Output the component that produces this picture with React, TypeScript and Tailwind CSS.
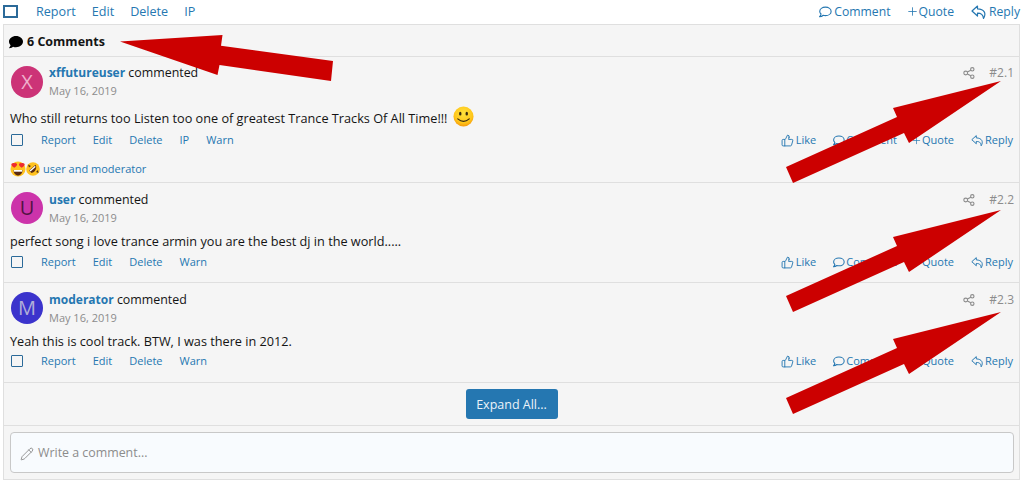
import { Plus, ThumbsUp, Pencil } from "lucide-react";
import { FaComment } from "react-icons/fa";

const font = { fontFamily: '"Open Sans", "Noto Sans", sans-serif' };

function ReplyIcon({ size = 14 }: { size?: number }) {
	return (
		<svg width={size} height={size} viewBox="0 0 16 16" fill="none" stroke="currentColor" strokeWidth="1.2">
			<path d="M6.5 2 L1 7 L6.5 12 V9.2 C10 9.2 12 10 12.5 14.5 C15.5 9.5 13.5 5 6.5 4.8 Z" strokeLinejoin="round" />
		</svg>
	);
}

function BubbleIcon({ size = 13 }: { size?: number }) {
	return (
		<svg width={size} height={size} viewBox="0 0 16 16" fill="none" stroke="currentColor" strokeWidth="1.3">
			<path d="M8.5 2.5c3.6 0 6.5 2 6.5 4.8s-2.9 4.8-6.5 4.8c-.9 0-1.7-.1-2.5-.4-1 .9-2.6 1.6-4.2 1.6.9-.9 1.5-1.9 1.7-3C2.5 9.400 2 8.400 2 7.300 2 4.500 4.900 2.500 8.500 2.500z" strokeLinejoin="round" />
		</svg>
	);
}

function ShareIcon() {
	return (
		<svg width="12" height="12" viewBox="0 0 12 12" fill="none" stroke="currentColor" strokeWidth="1.1">
			<circle cx="2.700" cy="6" r="1.900" />
			<circle cx="9.300" cy="2.300" r="1.700" />
			<circle cx="9.300" cy="9.700" r="1.700" />
			<path d="M4.400 5.100 7.800 3.200M4.400 6.900 7.800 8.800" />
		</svg>
	);
}

function Arrow({ points }: { points: string }) {
	return <polygon points={points} fill="#cc0000" />;
}

function shift(y: number) {
	return `1001,${81 + y} 893,${108 + y} 897,${117 + y} 786,${167 + y} 793,${183 + y} 904,${133 + y} 909,${143 + y}`;
}

function PostActions({ actions }: { actions: string[] }) {
	return (
		<div className="flex items-center justify-between pr-[6px] text-[11px] leading-[16px] text-[#2577b1]">
			<div className="flex items-center">
				<span className="mr-[18px] h-[12px] w-[12px] rounded-[1px] border-[1.5px] border-[#2b6a99]" />
				<div className="flex gap-[17px]">
					{actions.map((a) => (
						<span key={a}>{a}</span>
					))}
				</div>
			</div>
			<div className="flex items-center">
				<span className="mr-[16px] flex items-center gap-[2px]">
					<ThumbsUp size={13} strokeWidth={1.7} />
					Like
				</span>
				<span className="mr-[14px] flex items-center gap-[1px]">
					<BubbleIcon size={13} />
					Comment
				</span>
				<span className="mr-[17px] flex items-center">
					<Plus size={11} strokeWidth={1.5} />
					Quote
				</span>
				<span className="flex items-center gap-[1px]">
					<ReplyIcon size={13} />
					Reply
				</span>
			</div>
		</div>
	);
}

interface CommentProps {
	name: string;
	letter: string;
	avatar: string;
	number: string;
	text: React.ReactNode;
	actions: string[];
	bodyGap: string;
	className: string;
	avatarGap: string;
	footer?: React.ReactNode;
}

function Comment({ name, letter, avatar, number, text, actions, bodyGap, className, avatarGap, footer }: CommentProps) {
	return (
		<div className={`border-b border-[#dfdfdf] pl-[7px] ${className}`}>
			<div className="flex items-start justify-between pr-[5px]">
				<div className="flex">
					<div className={`mr-[6px] flex h-[32px] w-[32px] items-center justify-center rounded-full text-[20px] ${avatarGap} ${avatar}`}>
						{letter}
					</div>
					<div>
						<div className="mt-[1px] text-[12.4px] leading-[18px] text-[#141414]">
							<b className="text-[12px] font-bold text-[#2577b1]">{name}</b> commented
						</div>
						<div className="mt-[1px] text-[11px] leading-[15px] text-[#8c8c8c]">May 16, 2019</div>
					</div>
				</div>
				<div className="mt-[1px] flex items-center gap-[14px] text-[12px] leading-[18px] text-[#8c8c8c]">
					<ShareIcon />
					{number}
				</div>
			</div>
			<div className={`-ml-[1px] text-[12.7px] leading-[18px] text-[#141414] ${bodyGap}`}>{text}</div>
			<PostActions actions={actions} />
			{footer}
		</div>
	);
}

export default function App() {
	return (
		<div className="relative h-[483px] w-[1029px] overflow-hidden bg-white pl-[3px] pr-[9px]" style={font}>
			<div className="flex h-[24px] items-center justify-between text-[12.2px] text-[#2577b1]">
				<div className="flex items-center">
					<span className="mr-[18px] h-[13px] w-[15px] border-2 border-[#2b6a99]" />
					<div className="flex gap-[16px] text-[12.6px]">
						<span>Report</span>
						<span>Edit</span>
						<span>Delete</span>
						<span>IP</span>
					</div>
				</div>
				<div className="flex items-center">
					<span className="mr-[15px] flex items-center gap-[2px]">
						<BubbleIcon size={14} />
						Comment
					</span>
					<span className="mr-[17px] flex items-center">
						<Plus size={13} strokeWidth={1.5} />
						Quote
					</span>
					<span className="flex items-center gap-[2px]">
						<ReplyIcon size={16} />
						Reply
					</span>
				</div>
			</div>

			<div className="border border-[#dfdfdf] bg-[#f5f5f5]">
				<div className="flex h-[32px] items-center gap-[4px] border-b border-[#dfdfdf] pl-[5px] pt-[3px] text-[12.5px] font-bold text-[#141414]">
					<FaComment size={14} className="text-black" />
					6 Comments
				</div>

				<Comment
					name="xffutureuser"
					letter="X"
					avatar="bg-[#cc3377] text-[#f0b0cc]"
					number="#2.1"
					className="h-[126px] pt-[6px]"
					avatarGap="mt-[3px]"
					bodyGap="mt-[11px] mb-[5px] flex h-[18px] items-center"
					actions={["Report", "Edit", "Delete", "IP", "Warn"]}
					text={
						<>
							Who still returns too Listen too one of greatest Trance Tracks Of All Time!!!
							<svg className="ml-[6px] -mt-[3px]" width="21" height="21" viewBox="0 0 22 22">
								<defs>
									<radialGradient id="smile" cx="50%" cy="35%" r="65%">
										<stop offset="0%" stopColor="#ffe23d" />
										<stop offset="70%" stopColor="#ffc61a" />
										<stop offset="100%" stopColor="#f59a0c" />
									</radialGradient>
								</defs>
								<circle cx="11" cy="11" r="10.500" fill="url(#smile)" />
								<ellipse cx="7.600" cy="8" rx="1.300" ry="2" fill="#3a2a10" />
								<ellipse cx="14.400" cy="8" rx="1.300" ry="2" fill="#3a2a10" />
								<path d="M5 13.500 Q11 18.500 17 13.500" stroke="#3a2a10" strokeWidth="1.300" fill="none" strokeLinecap="round" />
							</svg>
						</>
					}
					footer={
						<div className="-ml-[1px] mt-[13px] flex items-center text-[11px] leading-[16px] text-[#2577b1]">
							<svg width="16" height="16" viewBox="0 0 16 16">
								<circle cx="8" cy="8" r="7.500" fill="#ffc21f" />
								<path d="M4.300 2.200c1.300-.8 2.800.2 2.800 1.300 0 1.500-2.100 2.700-2.800 3.200-.7-.5-3-1.700-3-3.200 0-1.100 1.700-2.100 3-1.300zM11.700 2.200c1.300-.8 3 .2 3 1.300 0 1.500-2.300 2.700-3 3.200-.7-.5-2.800-1.700-2.800-3.200 0-1.100 1.500-2.100 2.800-1.300z" fill="#ee2a2e" />
								<path d="M3.500 9h9c0 3-2 5.500-4.500 5.500S3.500 12 3.500 9z" fill="#5a2a10" />
								<path d="M3.800 9h8.400v1.700H3.800z" fill="#fff" />
							</svg>
							<svg className="mr-[3px]" width="14" height="16" viewBox="0 0 14 16">
								<circle cx="7" cy="8" r="6.800" fill="#ffc21f" />
								<path d="M3 9.500 9.500 3.800C11.500 7 9 11.500 5.500 12z" fill="#5a2a10" />
								<path d="M3.500 9.500 9 4.800l.6 1.200-5 4.600z" fill="#fff" />
								<path d="M2 3.500 5 5 3 6.500zM10 11l2-2 .5 3z" fill="#5a3510" />
							</svg>
							user and moderator
						</div>
					}
				/>

				<Comment
					name="user"
					letter="U"
					avatar="bg-[#cc33aa] text-[#521444]"
					number="#2.2"
					className="h-[100px] pt-[7px]"
					avatarGap="mt-[2px]"
					bodyGap="mt-[7px] mb-[4px]"
					actions={["Report", "Edit", "Delete", "Warn"]}
					text="perfect song i love trance armin you are the best dj in the world....."
				/>

				<Comment
					name="moderator"
					letter="M"
					avatar="bg-[#3b33cc] text-[#b1add8]"
					number="#2.3"
					className="h-[100px] pt-[7px]"
					avatarGap="mt-[2px]"
					bodyGap="mt-[7px] mb-[3px]"
					actions={["Report", "Edit", "Delete", "Warn"]}
					text="Yeah this is cool track. BTW, I was there in 2012."
				/>

				<div className="flex h-[43px] items-center justify-center border-b border-[#dfdfdf]">
					<button className="h-[30px] w-[92px] rounded-[3px] bg-[#2577b1] pt-[2px] text-[12.5px] text-[#ebf3f9]">Expand All...</button>
				</div>

				<div className="pb-[6px] pl-[6px] pr-[5px] pt-[6px]">
					<div className="flex h-[41px] items-center gap-[4px] rounded-[4px] border border-[#c8c8c8] bg-[#f8fbfe] pl-[9px] pt-[2px] text-[12.4px] text-[#8c8c8c]">
						<Pencil size={14} strokeWidth={1.3} className="text-[#777777]" />
						Write a comment...
					</div>
				</div>
			</div>

			<svg className="pointer-events-none absolute left-0 top-0" width="1029" height="483">
				<Arrow points="120,41.500 222.500,35 221,45.700 333,61 331,81 219.500,65 217.500,75" />
				<Arrow points={shift(0)} />
				<Arrow points={shift(129)} />
				<Arrow points={shift(231)} />
			</svg>
		</div>
	);
}
